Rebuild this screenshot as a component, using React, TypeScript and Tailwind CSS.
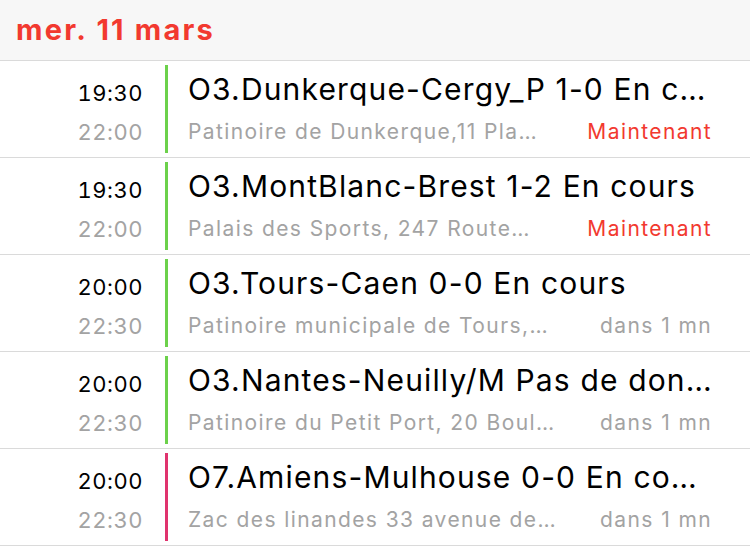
import React from "react";

type Ev = {
  start: string;
  end: string;
  title: string;
  place: string;
  when: string;
  now: boolean;
  color: string;
};

const events: Ev[] = [
  { start: "19:30", end: "22:00", title: "O3.Dunkerque-Cergy_P 1-0 En c…", place: "Patinoire de Dunkerque,11 Pla…", when: "Maintenant", now: true, color: "#6cd14b" },
  { start: "19:30", end: "22:00", title: "O3.MontBlanc-Brest 1-2 En cours", place: "Palais des Sports, 247 Route…", when: "Maintenant", now: true, color: "#6cd14b" },
  { start: "20:00", end: "22:30", title: "O3.Tours-Caen 0-0 En cours", place: "Patinoire municipale de Tours,…", when: "dans 1 mn", now: false, color: "#6cd14b" },
  { start: "20:00", end: "22:30", title: "O3.Nantes-Neuilly/M Pas de don…", place: "Patinoire du Petit Port, 20 Boul…", when: "dans 1 mn", now: false, color: "#6cd14b" },
  { start: "20:00", end: "22:30", title: "O7.Amiens-Mulhouse 0-0 En co…", place: "Zac des linandes 33 avenue de…", when: "dans 1 mn", now: false, color: "#e0336e" },
];

export default function App() {
  return (
    <div className="w-[750px] h-[547px] bg-white overflow-hidden" style={{ fontFamily: "Inter, 'Noto Sans', sans-serif" }}>
      <div className="h-[61px] bg-[#f7f7f7] border-b border-[#dadada] pl-[16px] flex items-start">
        <div className="mt-[13px] text-[29px] leading-[34px] font-bold text-[#f2392f] tracking-[2.2px]">mer. 11 mars</div>
      </div>
      {events.map((e, i) => (
        <div key={i} className="h-[97px] border-b border-[#dadada] flex">
          <div className="w-[143px] shrink-0 flex flex-col items-end tabular-nums">
            <div className="mt-[18px] text-[22px] leading-[28px] tracking-[0.5px] text-black">{e.start}</div>
            <div className="mt-[11px] text-[22px] leading-[28px] tracking-[0.5px] text-[#a3a3a3]">{e.end}</div>
          </div>
          <div className="ml-[22px] w-[3px] my-[4px] shrink-0" style={{ backgroundColor: e.color }} />
          <div className="flex-1 min-w-0 pl-[20px] pr-[38px] flex flex-col">
            <div className="mt-[10px] text-[30px] leading-[36px] tracking-[1.15px] text-black whitespace-nowrap">{e.title}</div>
            <div className="mt-[13px] flex items-center text-[21px] leading-[24px] tracking-[1.4px] whitespace-nowrap">
              <div className="flex-1 min-w-0 text-[#a3a3a3]">{e.place}</div>
              <div className={e.now ? "ml-[16px] text-[#f2392f]" : "ml-[16px] text-[#a3a3a3]"}>{e.when}</div>
            </div>
          </div>
        </div>
      ))}
    </div>
  );
}
